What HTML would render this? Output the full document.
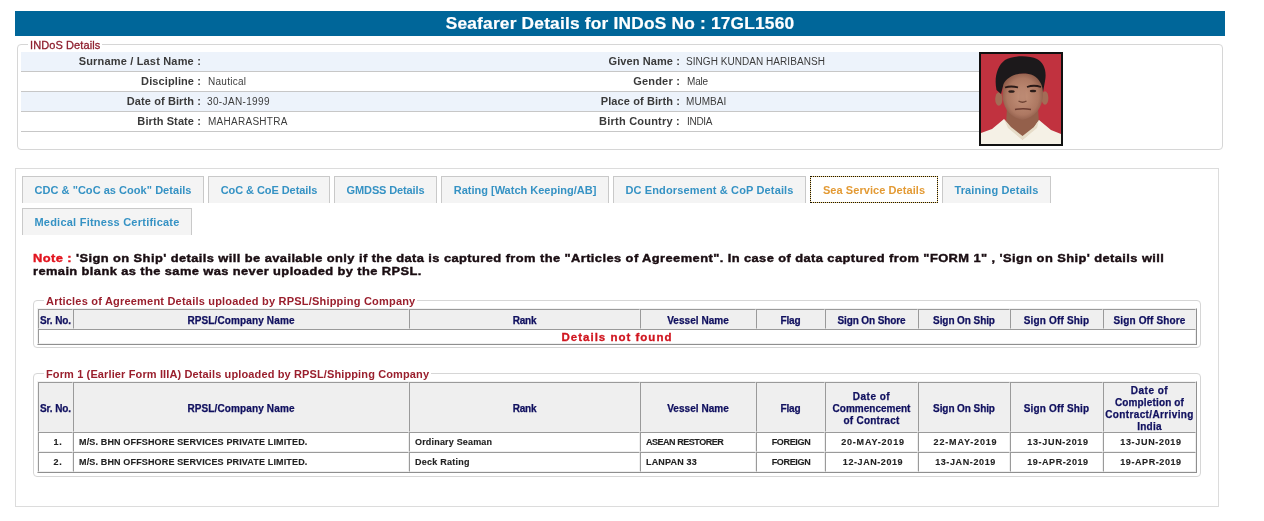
<!DOCTYPE html>
<html><head><meta charset="utf-8">
<style>
*{box-sizing:border-box;margin:0;padding:0}
html,body{width:1264px;height:521px;overflow:hidden;background:#fff}
body{position:relative;font-family:"Liberation Sans",sans-serif;color:#333}
.abs{position:absolute}
#bar{left:15px;top:11px;width:1210px;height:25px;background:#006699}
#title{left:15px;width:1210px;top:14px;text-align:center;color:#fff;font-weight:bold;font-size:16px;letter-spacing:0.2px;line-height:20px;white-space:nowrap;transform:scaleX(1.08);transform-origin:50% 0}
.fs{position:absolute;border:1px solid #d6d6d6;border-radius:4px}
.lg{position:absolute;background:#fff;color:#9a1f2d;font-size:11px;line-height:13px;white-space:nowrap;padding:0 2px}
.row{position:absolute;left:21px;width:958px;height:20px;border-bottom:1px solid #c7c7c7}
.row.b{background:#edf3fb}
.lab{position:absolute;font-weight:bold;font-size:11px;color:#3a3a3a;text-align:right;white-space:nowrap;line-height:13px;letter-spacing:0.1px}
.val{position:absolute;font-size:10px;color:#3c3c3c;white-space:nowrap;line-height:13px}
#photo{left:979px;top:52px;width:84px;height:94px;border:2px solid #111;background:#c0353f;overflow:hidden}
#photo svg{display:block}
#cont{left:15px;top:168px;width:1204px;height:339px;border:1px solid #dcdcdc}
.tab{position:absolute;height:27px;border:1px solid #c9c9c9;border-bottom:none;background:#f4f4f4;color:#3592c4;font-weight:bold;font-size:11px;text-align:center;line-height:27px;white-space:nowrap}
.tab.act{background:#fff;color:#e39a34;border:1px solid #f0cf7a;outline:1px dotted #111;outline-offset:-1px}
.note{position:absolute;left:33px;font-weight:bold;font-size:11.5px;color:#1a0d12;white-space:nowrap;line-height:14px;transform:scaleX(1.12);transform-origin:0 0}
table{position:absolute;border-collapse:separate;border-spacing:0;table-layout:fixed;border:1px solid;border-color:#f2f2f2 #8f8f8f #8f8f8f #f2f2f2}
td,th{border:1px solid;border-color:#9a9a9a #efefef #efefef #9a9a9a;padding:0;overflow:visible;white-space:nowrap}
th{background:#efefef;color:#10105f;font-weight:bold;font-size:10px;text-align:center;line-height:12px}
th span,td span{position:relative;top:2px}
td span{top:0}
th span span{top:0}
td{font-weight:bold;font-size:9px;color:#222;line-height:12px}
td.c{text-align:center;padding-left:3px}
td.l{padding-left:5px}
th{-webkit-text-stroke:0.25px currentColor}
.note{-webkit-text-stroke:0.4px currentColor}
td{-webkit-text-stroke:0.12px currentColor}
#title{-webkit-text-stroke:0.2px #fff}
body{will-change:transform}
</style></head><body>

<div id="bar" class="abs"></div>
<div id="title" class="abs">Seafarer Details for INDoS No : 17GL1560</div>

<!-- INDoS fieldset -->
<div class="fs" style="left:17px;top:44px;width:1206px;height:106px"></div>
<div class="lg" style="left:28px;top:39px;letter-spacing:0.1px;color:#8e1f2e;-webkit-text-stroke:0.3px #8e1f2e">INDoS Details</div>
<div class="row b" style="top:52px"></div>
<div class="row" style="top:72px"></div>
<div class="row b" style="top:92px"></div>
<div class="row" style="top:112px"></div>

<div class="lab" style="right:1063px;top:55px;letter-spacing:0.18px">Surname / Last Name :</div>
<div class="lab" style="right:1063px;top:75px">Discipline :</div>
<div class="lab" style="right:1063px;top:95px">Date of Birth :</div>
<div class="lab" style="right:1063px;top:115px">Birth State :</div>
<div class="val" style="left:208px;top:75px;letter-spacing:0.27px">Nautical</div>
<div class="val" style="left:207px;top:95px;letter-spacing:0.36px">30-JAN-1999</div>
<div class="val" style="left:208px;top:115px;letter-spacing:0.27px">MAHARASHTRA</div>

<div class="lab" style="right:584px;top:55px">Given Name :</div>
<div class="lab" style="right:584px;top:75px;letter-spacing:0.19px">Gender :</div>
<div class="lab" style="right:584px;top:95px">Place of Birth :</div>
<div class="lab" style="right:584px;top:115px;letter-spacing:0.22px">Birth Country :</div>
<div class="val" style="left:686px;top:55px;letter-spacing:0.05px">SINGH KUNDAN HARIBANSH</div>
<div class="val" style="left:687px;top:75px;letter-spacing:-0.2px">Male</div>
<div class="val" style="left:686px;top:95px;letter-spacing:0.08px">MUMBAI</div>
<div class="val" style="left:687px;top:115px;letter-spacing:-0.3px">INDIA</div>

<div id="photo" class="abs">
<svg width="80" height="90" viewBox="0 0 80 90">
<defs>
<radialGradient id="fc" cx="0.5" cy="0.5" r="0.6"><stop offset="0" stop-color="#c4927a"/><stop offset="0.65" stop-color="#ad7862"/><stop offset="1" stop-color="#7f4e3d"/></radialGradient>
</defs>
<rect width="80" height="90" fill="#c1323f"/>
<path d="M26,54 L57,54 L58,70 L42,84 L25,70 Z" fill="#94604b"/>
<ellipse cx="17.8" cy="45" rx="3.6" ry="6.8" fill="#a36c56"/>
<ellipse cx="64" cy="44" rx="3.4" ry="6.8" fill="#a36c56"/>
<path d="M22,26 C30,17 54,17 62,26 L62,42 C61,53 55,63 41.5,66 C28,63 22,53 21.5,42 Z" fill="url(#fc)"/>
<path d="M15.5,36 C13,24 16,12 24,6 C31,1.5 48,1 56,5 C63,9 66,17 64,27 L62,38 C61.5,33 60.5,30 59,28 C56,22 50,19.5 42,19.5 C34,19.5 26,23 22.5,30 L20,40 Z" fill="#1c191b"/>
<path d="M24,33.5 Q30,31.5 37,33.5" stroke="#2a1a17" stroke-width="1.8" fill="none"/>
<path d="M46,33 Q53,30.5 60,33" stroke="#2a1a17" stroke-width="1.8" fill="none"/>
<ellipse cx="30.5" cy="37.5" rx="3.2" ry="1.3" fill="#2a1c19"/>
<ellipse cx="52" cy="37" rx="3.2" ry="1.3" fill="#2a1c19"/>
<path d="M39,33 L38,46 Q41.5,49 45,46 L44,33" fill="#b88670" opacity="0.6"/>
<path d="M37.5,47 Q41.5,49.5 45.5,47" stroke="#6e4234" stroke-width="1.3" fill="none"/>
<path d="M34,55.5 Q42,54 50,55.5" stroke="#6a3a30" stroke-width="1.5" fill="none"/>
<path d="M0,79 L11,75 L23,65 L33,78 L42,86 L42,90 L0,90 Z" fill="#f5f1e6"/>
<path d="M80,80 L70,76 L58,66 L50,78 L41,86 L41,90 L80,90 Z" fill="#f5f1e6"/>
<path d="M23,65 L27,74 L41.5,86 L56,74 L58,66 L53,73 L41.5,82 L30,73 Z" fill="#e6dcc8"/>
</svg>
</div>

<!-- tabs container -->
<div id="cont" class="abs"></div>
<div class="tab" style="left:22px;top:176px;width:182px;letter-spacing:0.04px">CDC &amp; "CoC as Cook" Details</div>
<div class="tab" style="left:208px;top:176px;width:122px;letter-spacing:-0.07px">CoC &amp; CoE Details</div>
<div class="tab" style="left:334px;top:176px;width:103px;letter-spacing:-0.13px">GMDSS Details</div>
<div class="tab" style="left:441px;top:176px;width:168px">Rating [Watch Keeping/AB]</div>
<div class="tab" style="left:613px;top:176px;width:193px;letter-spacing:0.14px">DC Endorsement &amp; CoP Details</div>
<div class="tab act" style="left:810px;top:176px;width:128px;letter-spacing:0.07px">Sea Service Details</div>
<div class="tab" style="left:942px;top:176px;width:109px;letter-spacing:0.14px">Training Details</div>
<div class="tab" style="left:22px;top:208px;width:170px;letter-spacing:0.24px">Medical Fitness Certificate</div>

<div class="note" style="top:251px;letter-spacing:0.372px"><span style="color:#e2151f">Note : </span>'Sign on Ship' details will be available only if the data is captured from the "Articles of Agreement". In case of data captured from "FORM 1" , 'Sign on Ship' details will</div>
<div class="note" style="top:264px;letter-spacing:0.354px">remain blank as the same was never uploaded by the RPSL.</div>

<!-- fieldset 1 -->
<div class="fs" style="left:33px;top:300px;width:1168px;height:48px"></div>
<div class="lg" style="left:44px;top:295px;font-weight:bold;letter-spacing:0.205px">Articles of Agreement Details uploaded by RPSL/Shipping Company</div>
<table style="left:37px;top:308px;width:1160px">
<tr style="height:20px">
<th style="width:35px;letter-spacing:-0.1px"><span>Sr. No.</span></th><th style="width:336px;letter-spacing:0.13px"><span>RPSL/Company Name</span></th><th style="width:231px;letter-spacing:-0.2px"><span>Rank</span></th><th style="width:116px;letter-spacing:0.04px"><span>Vessel Name</span></th><th style="width:69px;letter-spacing:-0.15px"><span>Flag</span></th><th style="width:93px;letter-spacing:-0.1px"><span>Sign On Shore</span></th><th style="width:92px;letter-spacing:-0.08px"><span>Sign On Ship</span></th><th style="width:93px;letter-spacing:0.18px"><span>Sign Off Ship</span></th><th style="width:93px;letter-spacing:0.15px"><span>Sign Off Shore</span></th>
</tr>
<tr style="height:15px"><td colspan="9" style="text-align:center;color:#d0151f;font-size:11.5px;letter-spacing:1.0px;line-height:13px;-webkit-text-stroke:0.3px #d0151f"><span style="top:1px">Details not found</span></td></tr>
</table>

<!-- fieldset 2 -->
<div class="fs" style="left:33px;top:373px;width:1168px;height:104px"></div>
<div class="lg" style="left:44px;top:368px;font-weight:bold;letter-spacing:0.125px">Form 1 (Earlier Form IIIA) Details uploaded by RPSL/Shipping Company</div>
<table style="left:37px;top:381px;width:1160px">
<tr style="height:50px">
<th style="width:35px;letter-spacing:-0.1px"><span>Sr. No.</span></th><th style="width:336px;letter-spacing:0.13px"><span>RPSL/Company Name</span></th><th style="width:231px;letter-spacing:-0.2px"><span>Rank</span></th><th style="width:116px;letter-spacing:0.04px"><span>Vessel Name</span></th><th style="width:69px;letter-spacing:-0.15px"><span>Flag</span></th><th style="width:93px"><span><span style="letter-spacing:0.49px">Date of</span><br>Commencement<br><span style="letter-spacing:0.25px">of Contract</span></span></th><th style="width:92px;letter-spacing:-0.08px"><span>Sign On Ship</span></th><th style="width:93px;letter-spacing:0.18px"><span>Sign Off Ship</span></th><th style="width:93px"><span><span style="letter-spacing:0.49px">Date of</span><br><span style="letter-spacing:0.15px">Completion of</span><br><span style="letter-spacing:0.38px">Contract/Arriving</span><br><span style="letter-spacing:0.26px">India</span></span></th>
</tr>
<tr style="height:20px"><td class="c" style="letter-spacing:0.8px;padding-left:5px"><span>1.</span></td><td class="l" style="letter-spacing:0.15px"><span>M/S. BHN OFFSHORE SERVICES PRIVATE LIMITED.</span></td><td class="l" style="letter-spacing:0.18px"><span>Ordinary Seaman</span></td><td class="l" style="letter-spacing:-0.47px"><span>ASEAN RESTORER</span></td><td class="c" style="letter-spacing:-0.33px;padding-left:1px"><span>FOREIGN</span></td><td class="c" style="letter-spacing:0.82px"><span>20-MAY-2019</span></td><td class="c" style="letter-spacing:0.83px"><span>22-MAY-2019</span></td><td class="c" style="letter-spacing:0.68px"><span>13-JUN-2019</span></td><td class="c" style="letter-spacing:0.68px"><span>13-JUN-2019</span></td></tr>
<tr style="height:20px"><td class="c" style="letter-spacing:0.8px;padding-left:5px"><span>2.</span></td><td class="l" style="letter-spacing:0.15px"><span>M/S. BHN OFFSHORE SERVICES PRIVATE LIMITED.</span></td><td class="l" style="letter-spacing:0.25px"><span>Deck Rating</span></td><td class="l" style="letter-spacing:0.17px"><span>LANPAN 33</span></td><td class="c" style="letter-spacing:-0.33px;padding-left:1px"><span>FOREIGN</span></td><td class="c" style="letter-spacing:0.57px"><span>12-JAN-2019</span></td><td class="c" style="letter-spacing:0.61px"><span>13-JAN-2019</span></td><td class="c" style="letter-spacing:0.58px"><span>19-APR-2019</span></td><td class="c" style="letter-spacing:0.58px"><span>19-APR-2019</span></td></tr>
</table>

</body></html>
